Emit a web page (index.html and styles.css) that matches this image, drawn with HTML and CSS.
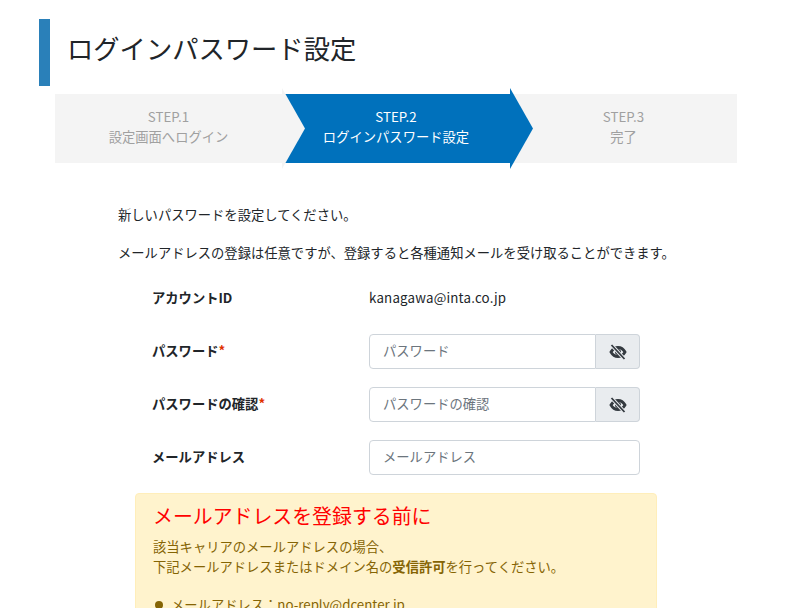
FILE: index.html
```html
<!DOCTYPE html>
<html lang="ja">
  <head>
    <meta charset="UTF-8" />
    <meta name="viewport" content="width=device-width, initial-scale=1.0" />
    <title>ログインパスワード設定</title>
    <link rel="stylesheet" href="styles.css">
  </head>
  <body>
    <div class="page">
      <h1 class="page-title">ログインパスワード設定</h1>

      <ol class="steps">
        <li class="step">STEP.1<br>設定画面へログイン</li>
        <li class="step active">STEP.2<br>ログインパスワード設定</li>
        <li class="step last">STEP.3<br>完了</li>
      </ol>

      <div class="content">
        <p class="lead">新しいパスワードを設定してください。</p>
        <p class="lead">メールアドレスの登録は任意ですが、登録すると各種通知メールを受け取ることができます。</p>

        <form class="form">
          <div class="row account">
            <label>アカウントID</label>
            <span class="account-id">kanagawa@inta.co.jp</span>
          </div>
          <div class="row">
            <label>パスワード<em>*</em></label>
            <div class="input-group">
              <input type="password" placeholder="パスワード">
              <button type="button" class="eye" aria-label="表示">
                <svg width="18" height="16" viewBox="0 0 18 16">
                  <path d="M2 8c1.800-3.200 4-4.500 7-4.500s5.200 1.300 7 4.500c-1.800 3.200-4 4.500-7 4.500S3.800 11.200 2 8z" fill="none" stroke="#343a40" stroke-width="2.800"/>
                  <circle cx="9" cy="8" r="3" fill="#343a40"/>
                  <path d="M2.500 1l13 14" stroke="#e9ecef" stroke-width="3.600"/>
                  <path d="M2.500 1l13 14" stroke="#343a40" stroke-width="1.800"/>
                </svg>
              </button>
            </div>
          </div>
          <div class="row">
            <label>パスワードの確認<em>*</em></label>
            <div class="input-group">
              <input type="password" placeholder="パスワードの確認">
              <button type="button" class="eye" aria-label="表示">
                <svg width="18" height="16" viewBox="0 0 18 16">
                  <path d="M2 8c1.800-3.200 4-4.500 7-4.500s5.200 1.300 7 4.500c-1.800 3.200-4 4.500-7 4.500S3.800 11.200 2 8z" fill="none" stroke="#343a40" stroke-width="2.800"/>
                  <circle cx="9" cy="8" r="3" fill="#343a40"/>
                  <path d="M2.500 1l13 14" stroke="#e9ecef" stroke-width="3.600"/>
                  <path d="M2.500 1l13 14" stroke="#343a40" stroke-width="1.800"/>
                </svg>
              </button>
            </div>
          </div>
          <div class="row">
            <label>メールアドレス</label>
            <div class="input-group">
              <input type="email" placeholder="メールアドレス">
            </div>
          </div>
        </form>

        <div class="notice">
          <h2>メールアドレスを登録する前に</h2>
          <p>該当キャリアのメールアドレスの場合、<br>下記メールアドレスまたはドメイン名の<strong>受信許可</strong>を行ってください。</p>
          <ul>
            <li>メールアドレス：no-reply@dcenter.jp</li>
          </ul>
        </div>
      </div>
    </div>
  </body>
</html>
```

FILE: styles.css
```css
* {
  box-sizing: border-box;
}
html {
  overflow: hidden;
}
body {
  font-family: "Noto Sans CJK JP", "Noto Sans", sans-serif;
  font-size: 13.3px;
  color: #212529;
  background: #fff;
  margin: 0;
}
.page {
  padding: 19px 55px 0 39px;
}
.page-title {
  height: 67px;
  margin: 0;
  padding-left: 17px;
  border-left: 11px solid #2a80b9;
  font-size: 26.3px;
  font-weight: 400;
  line-height: 58px;
  color: #212529;
}
.steps {
  display: grid;
  grid-template-columns: 227px 228px 227px;
  height: 69px;
  margin: 8px 0 0 16px;
  padding: 0;
  list-style: none;
}
.step {
  position: relative;
  padding-top: 13px;
  text-align: center;
  background: #f4f4f4;
  color: #a0a0a0;
  line-height: 20px;
}
.step::after {
  content: "";
  position: absolute;
  z-index: 1;
  top: -6px;
  left: 100%;
  width: 23px;
  height: 81px;
  background: #f4f4f4;
  clip-path: polygon(0 0, 100% 50%, 0 100%);
}
.step.active {
  background: #0071bc;
  color: #fff;
}
.step.active::after {
  background: #0071bc;
}
.step.last::after {
  display: none;
}
.content {
  padding: 42px 0 0 79px;
}
.lead {
  margin: 0 0 18px;
  line-height: 20px;
}
.form {
  padding: 0 0 0 34px;
}
.row {
  display: grid;
  grid-template-columns: 217px 271px;
  align-items: center;
  margin-bottom: 18px;
}
.row label {
  padding-bottom: 3px;
  font-weight: 700;
}
.row em {
  color: #e03000;
  font-style: normal;
}
.account {
  height: 35px;
}
.account-id {
  padding-bottom: 2px;
  letter-spacing: 0.2px;
}
.input-group {
  display: flex;
  height: 35px;
}
.input-group input {
  flex: 1;
  min-width: 0;
  padding: 0 13px 2px;
  border: 1px solid #ced4da;
  border-radius: 4px;
  font: inherit;
  color: #495057;
}
.input-group input::placeholder {
  color: #6c757d;
}
.input-group input:not(:last-child) {
  border-radius: 4px 0 0 4px;
}
.eye {
  display: flex;
  align-items: center;
  justify-content: center;
  width: 44px;
  padding: 0;
  border: 1px solid #ced4da;
  border-left: 0;
  border-radius: 0 4px 4px 0;
  background: #e9ecef;
}
.notice {
  width: 522px;
  margin: 0 0 20px 17px;
  padding: 8px 17px 20px;
  border: 1px solid #ffeeba;
  border-radius: 4px;
  background: #fff3cd;
  color: #856404;
}
.notice h2 {
  margin: 0 0 7px;
  color: #f00;
  font-size: 19.9px;
  font-weight: 400;
  line-height: 28px;
}
.notice p {
  margin: 0 0 17px;
  line-height: 20px;
}
.notice ul {
  margin: 0;
  padding: 0;
  list-style: none;
}
.notice li {
  display: flex;
  align-items: center;
  gap: 8px;
  line-height: 22px;
}
.notice li::before {
  content: "";
  width: 8px;
  height: 8px;
  margin-left: 2px;
  border-radius: 50%;
  background: #856404;
}
```
